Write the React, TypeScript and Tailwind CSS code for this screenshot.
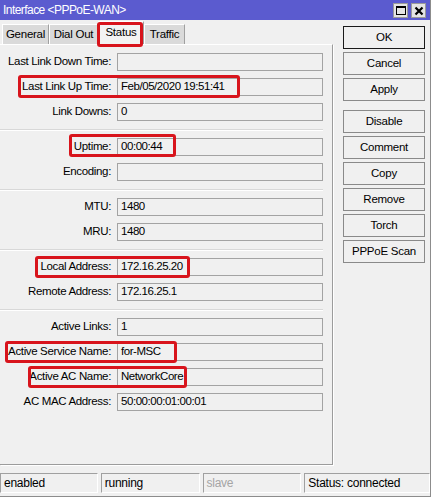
import React from "react";

type Row = { label: string; value: string };

const groups: Row[][] = [
  [
    { label: "Last Link Down Time:", value: "" },
    { label: "Last Link Up Time:", value: "Feb/05/2020 19:51:41" },
    { label: "Link Downs:", value: "0" },
  ],
  [
    { label: "Uptime:", value: "00:00:44" },
    { label: "Encoding:", value: "" },
  ],
  [
    { label: "MTU:", value: "1480" },
    { label: "MRU:", value: "1480" },
  ],
  [
    { label: "Local Address:", value: "172.16.25.20" },
    { label: "Remote Address:", value: "172.16.25.1" },
  ],
  [
    { label: "Active Links:", value: "1" },
    { label: "Active Service Name:", value: "for-MSC" },
    { label: "Active AC Name:", value: "NetworkCore" },
    { label: "AC MAC Address:", value: "50:00:00:01:00:01" },
  ],
];

function Field({ label, value }: Row) {
  return (
    <div className="flex items-center h-[18px]">
      <div className="w-[111px] text-right text-[#000] whitespace-nowrap tracking-[-0.35px]">{label}</div>
      <div className="ml-[6px] w-[206px] h-[18px] border border-[#a3a3a3] bg-[#f0f0f0] flex items-center pl-[3px] whitespace-nowrap tracking-[-0.45px]">
        {value}
      </div>
    </div>
  );
}

function Btn({ label, def }: { label: string; def?: boolean }) {
  return (
    <div
      className={
        "w-[82px] h-[23px] flex items-center justify-center bg-[#f0f0f0] border " +
        (def ? "border-[#1a1a1a]" : "border-[#8a8a8a]")
      }
    >
      {label}
    </div>
  );
}

function Tab({ label, w, active }: { label: string; w: string; active?: boolean }) {
  return (
    <div
      className={
        "flex items-center justify-center border-t border-l border-white border-r border-r-[#a0a0a0] " +
        w +
        (active ? " h-[23px] bg-[#f3f3f3]" : " h-[20px] bg-[#dadada]")
      }
    >
      {label}
    </div>
  );
}

function Cell({ children, w, muted }: { children: React.ReactNode; w: string; muted?: boolean }) {
  return (
    <div
      className={
        "h-[20px] flex items-center pl-[3px] border-t border-l border-t-[#a0a0a0] border-l-[#a0a0a0] border-b border-r border-b-white border-r-white " +
        w +
        (muted ? " text-[#a5a5a5]" : " text-black")
      }
    >
      {children}
    </div>
  );
}

function RedBox({ cls }: { cls: string }) {
  return <div className={"absolute border-[3px] border-[#d8141c] rounded-[3px] " + cls} />;
}

export default function App() {
  return (
    <div className="relative w-[431px] h-[497px] bg-[#f0f0f0] overflow-hidden font-['Liberation_Sans',Arial,sans-serif] text-[11.5px] tracking-[-0.25px] text-black border-r border-b border-[#8c8c8c]">
      {/* Title bar */}
      <div className="h-[20px] bg-[#5b5bcf] flex items-center justify-between pl-[3px] pr-[4px]">
        <span className="text-white text-[12px] tracking-[-0.55px]">Interface &lt;PPPoE-WAN&gt;</span>
        <div className="flex gap-[3px] pt-[1px]">
          <div className="w-[15px] h-[15px] bg-[#e4e4e4] border border-[#9a9a9a] flex items-center justify-center">
            <div className="w-[10px] h-[9px] border border-black border-t-2" />
          </div>
          <div className="w-[15px] h-[15px] bg-[#e4e4e4] border border-[#9a9a9a] flex items-center justify-center">
            <svg width="10" height="10" viewBox="0 0 10 10">
              <path d="M1.5 1.5 L8.5 8.5 M8.5 1.5 L1.5 8.5" stroke="#000" strokeWidth="2.2" />
            </svg>
          </div>
        </div>
      </div>

      {/* Main */}
      <div className="flex h-[453px]">
        <div className="w-[333px] flex flex-col">
          <div className="h-[24px] flex items-end pl-[2px]">
            <Tab label="General" w="w-[47px]" />
            <Tab label="Dial Out" w="w-[49px]" />
            <Tab label="Status" w="w-[46px]" active />
            <Tab label="Traffic" w="w-[41px]" />
          </div>
          <div className="h-[421px] border-t border-t-white border-r border-r-[#9c9c9c] border-b border-b-[#9c9c9c] shadow-[1px_1px_0_#ffffff] pt-[8px]">
            {groups.map((g, gi) => (
              <div key={gi}>
                {gi > 0 && (
                  <div className="mt-[8px] mb-[7px] w-[323px] h-[2px] border-t border-t-[#d8d8d8] border-b border-b-white" />
                )}
                <div className="flex flex-col gap-[7px]">
                  {g.map((r) => (
                    <Field key={r.label} {...r} />
                  ))}
                </div>
              </div>
            ))}
          </div>
        </div>

        <div className="ml-[10px] pt-[6px] flex flex-col">
          <div className="flex flex-col gap-[3px]">
            <Btn label="OK" def />
            <Btn label="Cancel" />
            <Btn label="Apply" />
          </div>
          <div className="flex flex-col gap-[3px] mt-[9px]">
            <Btn label="Disable" />
            <Btn label="Comment" />
            <Btn label="Copy" />
            <Btn label="Remove" />
            <Btn label="Torch" />
            <Btn label="PPPoE Scan" />
          </div>
        </div>
      </div>

      {/* Status bar */}
      <div className="flex gap-[3px] text-[12px]">
        <Cell w="w-[98px]">enabled</Cell>
        <Cell w="w-[99px]">running</Cell>
        <Cell w="w-[99px]" muted>slave</Cell>
        <Cell w="w-[126px]">Status: connected</Cell>
      </div>

      {/* Annotation boxes */}
      <RedBox cls="left-[97px] top-[22px] w-[46px] h-[25px]" />
      <RedBox cls="left-[18px] top-[75px] w-[222px] h-[23px]" />
      <RedBox cls="left-[69px] top-[134px] w-[107px] h-[23px]" />
      <RedBox cls="left-[35px] top-[256px] w-[155px] h-[22px]" />
      <RedBox cls="left-[5px] top-[341px] w-[172px] h-[22px]" />
      <RedBox cls="left-[28px] top-[366px] w-[159px] h-[22px]" />
    </div>
  );
}
